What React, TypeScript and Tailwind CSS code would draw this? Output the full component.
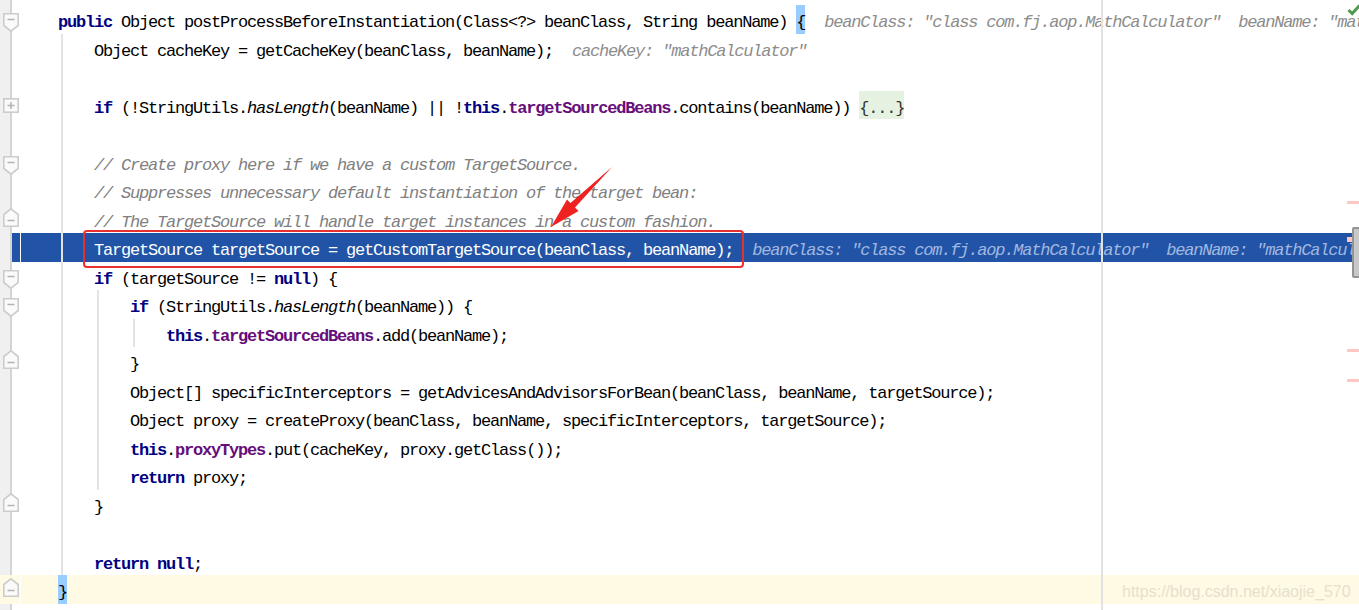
import React from 'react';

type Tok = [string, string];

type Row = {
    indent: number;
    toks: Tok[];
    inlay?: string;
    marker?: 'open' | 'close' | 'plus';
    kind?: 'exec' | 'caret';
};

const rows: Row[] = [
    {
        indent: 0,
        marker: 'open',
        toks: [['k', 'public'], ['p', ' Object postProcessBeforeInstantiation(Class<?> beanClass, String beanName) '], ['b', '{']],
        inlay: 'beanClass: "class com.fj.aop.MathCalculator"  beanName: "mathCalculator"',
    },
    { indent: 1, toks: [['p', 'Object cacheKey = getCacheKey(beanClass, beanName);']], inlay: 'cacheKey: "mathCalculator"' },
    { indent: 1, toks: [] },
    {
        indent: 1,
        marker: 'plus',
        toks: [
            ['k', 'if'], ['p', ' (!StringUtils.'], ['s', 'hasLength'], ['p', '(beanName) || !'], ['k', 'this'], ['p', '.'],
            ['f', 'targetSourcedBeans'], ['p', '.contains(beanName)) '], ['fold', '{...}'],
        ],
    },
    { indent: 1, toks: [] },
    { indent: 1, marker: 'open', toks: [['c', '// Create proxy here if we have a custom TargetSource.']] },
    { indent: 1, toks: [['c', '// Suppresses unnecessary default instantiation of the target bean:']] },
    { indent: 1, marker: 'close', toks: [['c', '// The TargetSource will handle target instances in a custom fashion.']] },
    {
        indent: 1,
        kind: 'exec',
        toks: [['p', 'TargetSource targetSource = getCustomTargetSource(beanClass, beanName);']],
        inlay: 'beanClass: "class com.fj.aop.MathCalculator"  beanName: "mathCalculator"',
    },
    { indent: 1, marker: 'open', toks: [['k', 'if'], ['p', ' (targetSource != '], ['k', 'null'], ['p', ') {']] },
    { indent: 2, marker: 'open', toks: [['k', 'if'], ['p', ' (StringUtils.'], ['s', 'hasLength'], ['p', '(beanName)) {']] },
    { indent: 3, toks: [['k', 'this'], ['p', '.'], ['f', 'targetSourcedBeans'], ['p', '.add(beanName);']] },
    { indent: 2, marker: 'close', toks: [['p', '}']] },
    { indent: 2, toks: [['p', 'Object[] specificInterceptors = getAdvicesAndAdvisorsForBean(beanClass, beanName, targetSource);']] },
    { indent: 2, toks: [['p', 'Object proxy = createProxy(beanClass, beanName, specificInterceptors, targetSource);']] },
    { indent: 2, toks: [['k', 'this'], ['p', '.'], ['f', 'proxyTypes'], ['p', '.put(cacheKey, proxy.getClass());']] },
    { indent: 2, toks: [['k', 'return'], ['p', ' proxy;']] },
    { indent: 1, marker: 'close', toks: [['p', '}']] },
    { indent: 1, toks: [] },
    { indent: 1, toks: [['k', 'return'], ['p', ' '], ['k', 'null'], ['p', ';']] },
    { indent: 0, marker: 'close', kind: 'caret', toks: [['b', '}']] },
];

const tokClass: Record<string, string> = {
    p: 'text-black',
    k: 'font-bold text-[#000080]',
    f: 'font-bold text-[#660e7a]',
    s: 'italic text-black',
    c: 'italic text-[#808080]',
    b: 'bg-[#99ccff] text-black',
    fold: 'bg-[#e6f2e1] text-[#333333]',
};

// indent guides: [left offset in code cell, first row, last row]
const guides: [number, number, number][] = [
    [40, 1, 19],
    [76, 10, 16],
    [112, 11, 11],
];

function Marker({ type }: { type: 'open' | 'close' | 'plus' }) {
    if (type === 'plus') {
        return (
            <svg className="mt-[7px]" width="16" height="15" viewBox="0 0 16 15">
                <rect x="0.8" y="0.8" width="14.4" height="13.4" fill="#fafafa" stroke="#cccccc" strokeWidth="1.6" />
                <path d="M4.5 7.5H11.5M8 4V11" stroke="#b3b3b3" strokeWidth="1.5" />
            </svg>
        );
    }
    if (type === 'open') {
        return (
            <svg className="mt-[8px]" width="16" height="19" viewBox="0 0 16 19">
                <path d="M0.8 0.8H15.2V12.5L8 18.2L0.8 12.5Z" fill="#fafafa" stroke="#cccccc" strokeWidth="1.6" />
                <path d="M4.5 6.5H11.5" stroke="#b3b3b3" strokeWidth="1.5" />
            </svg>
        );
    }
    return (
        <svg className="mt-[3px]" width="16" height="19" viewBox="0 0 16 19">
            <path d="M0.8 18.2H15.2V6.5L8 0.8L0.8 6.5Z" fill="#fafafa" stroke="#cccccc" strokeWidth="1.6" />
            <path d="M4.5 12.5H11.5" stroke="#b3b3b3" strokeWidth="1.5" />
        </svg>
    );
}

function CodeRow({ row, index }: { row: Row; index: number }) {
    const exec = row.kind === 'exec';
    const caret = row.kind === 'caret';

    const gutterBg = exec
        ? 'bg-[linear-gradient(to_right,transparent_12px,#2154a6_12px)]'
        : caret
          ? 'bg-[#fffae3]'
          : '';
    const codeBg = exec ? 'bg-[#2154a6]' : caret ? 'bg-[#fffae3]' : '';

    const toks: Tok[] = [['p', '    '.repeat(row.indent)], ...row.toks];

    return (
        <div className="flex h-[28.5px]">
            <div className={`flex w-[20px] shrink-0 items-start justify-center pl-[2px] ${gutterBg}`}>
                {row.marker && <Marker type={row.marker} />}
            </div>
            <div className="w-px shrink-0 bg-white" />
            <div className={`relative flex flex-1 pl-[37px] ${codeBg}`}>
                {toks.map(([kind, text], i) => (
                    <span
                        key={i}
                        className={`whitespace-pre pt-[7px] leading-[21.5px] ${exec ? 'text-white' : tokClass[kind]}`}
                    >
                        {text}
                    </span>
                ))}
                {row.inlay && (
                    <span
                        className={`ml-[19px] whitespace-pre pt-[7px] leading-[21.5px] italic ${exec ? 'text-[#a2b8e0]' : 'text-[#8c8c8c]'}`}
                    >
                        {row.inlay}
                    </span>
                )}
                {guides
                    .filter(([, a, b]) => index >= a && index <= b)
                    .map(([left]) => (
                        <span
                            key={left}
                            className="absolute top-0 h-full w-[2px] bg-[#e4e4e4]"
                            style={{ left }}
                        />
                    ))}
            </div>
        </div>
    );
}

export default function App() {
    return (
        <div className="relative h-[610px] w-[1359px] overflow-hidden bg-[linear-gradient(to_right,#f0f0f0_10px,#d4d4d4_10px,#d4d4d4_12px,#ffffff_12px)] font-['Liberation_Mono',monospace] text-[17px] tracking-[-1.2px]">
            <div className="pt-[5.3px]">
                {rows.map((row, i) => (
                    <CodeRow key={i} row={row} index={i} />
                ))}
            </div>

            {/* right margin */}
            <div className="absolute left-[1101px] top-0 h-full w-[2px] bg-[#e2e2e2]" />

            {/* error stripe + scrollbar */}
            <div className="absolute right-0 top-[201px] h-[3px] w-[12px] bg-[#ffc6c6]" />
            <div className="absolute left-[1347px] top-[237px] h-[5px] w-[5px] bg-[#ffc6c6]" />
            <div className="absolute right-0 top-[349px] h-[3px] w-[12px] bg-[#ffc6c6]" />
            <div className="absolute right-0 top-[379px] h-[3px] w-[12px] bg-[#ffc6c6]" />
            <div className="absolute left-[1352px] top-[227px] h-[51px] w-[9px] rounded-[2px] border-2 border-[#949494] bg-[#c8c8c8]" />
            <svg className="absolute left-[1347px] top-[4px]" width="14" height="12" viewBox="0 0 14 12">
                <path d="M1.5 6L5.2 9.5L12.5 1.5" fill="none" stroke="#4f9a4f" strokeWidth="3" />
            </svg>

            {/* annotation */}
            <div className="absolute left-[83px] top-[230px] h-[38px] w-[661px] rounded-[4px] border-2 border-[#e8312f]" />
            <svg className="pointer-events-none absolute left-0 top-0" width="1359" height="610">
                <polygon
                    points="612,167 575,207.5 578.5,211 551,227 567,199.5 570.5,203"
                    fill="#ef2121"
                />
            </svg>

            <div className="absolute left-[1122px] top-[580px] font-['Liberation_Sans',sans-serif] text-[16px] tracking-normal text-[#e6e0cc]">
                https://blog.csdn.net/xiaojie_570
            </div>
        </div>
    );
}
